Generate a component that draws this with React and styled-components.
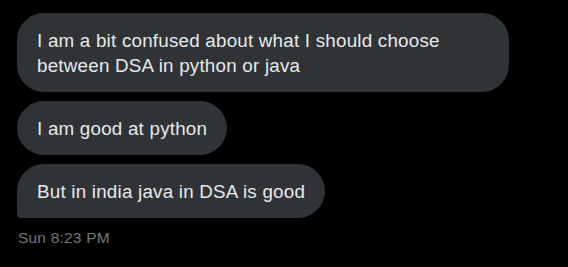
import styled, { createGlobalStyle } from "styled-components";

const GlobalStyle = createGlobalStyle`
  html, body {
    margin: 0;
    padding: 0;
    background: #000;
  }
`;

const Thread = styled.div`
  width: 568px;
  height: 267px;
  box-sizing: border-box;
  padding: 13px 17px;
  background: #000;
  font-family: "Segoe UI", "Liberation Sans", Arial, sans-serif;
  display: flex;
  flex-direction: column;
  align-items: flex-start;
`;

const Group = styled.div`
  display: flex;
  flex-direction: column;
  align-items: flex-start;
  gap: 9px;
`;

const Bubble = styled.div`
  box-sizing: border-box;
  max-width: 492px;
  min-height: 54px;
  padding: 15px 20px 14px;
  background: #2f3336;
  color: #e7e9ea;
  font-size: 18.8px;
  letter-spacing: 0.22px;
  line-height: 25px;
  border-radius: 27px;
  border-bottom-left-radius: ${(p) => (p.$last ? "4px" : "27px")};
`;

const Time = styled.div`
  margin-top: 10px;
  margin-left: 1px;
  color: #71767b;
  font-size: 15.5px;
  letter-spacing: 0.2px;
  line-height: 20px;
`;

const messages = [
  "I am a bit confused about what I should choose between DSA in python or java",
  "I am good at python",
  "But in india java in DSA is good",
];

export default function App() {
  return (
    <>
      <GlobalStyle />
      <Thread>
        <Group>
          {messages.map((text, i) => (
            <Bubble key={i} $last={i === messages.length - 1}>
              {text}
            </Bubble>
          ))}
        </Group>
        <Time>Sun 8:23 PM</Time>
      </Thread>
    </>
  );
}
